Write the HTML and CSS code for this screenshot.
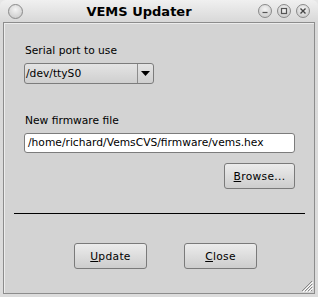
FILE: index.html
```html
<!DOCTYPE html>
<html lang="en">
  <head>
    <meta charset="UTF-8" />
    <title>VEMS Updater</title>
    <link rel="stylesheet" href="styles.css">
  </head>
  <body>
    <div class="window">
      <div class="titlebar">
        <span class="tb-btn tb-menu"></span>
        <span class="title">VEMS Updater</span>
        <span class="tb-btn">
          <svg width="14" height="14" viewBox="0 0 14 14"><path d="M4.5 8.5h5" stroke="#555" stroke-width="1.2"/></svg>
        </span>
        <span class="tb-btn">
          <svg width="14" height="14" viewBox="0 0 14 14"><rect x="4.5" y="4.5" width="5" height="5" fill="none" stroke="#555" stroke-width="1.2"/></svg>
        </span>
        <span class="tb-btn">
          <svg width="14" height="14" viewBox="0 0 14 14"><path d="M4.5 4.5l5 5M9.5 4.5l-5 5" stroke="#444" stroke-width="1.4"/></svg>
        </span>
      </div>
      <div class="frame">
        <div class="content">
          <div class="label">Serial port to use</div>
          <div class="combo">
            <span class="combo-text">/dev/ttyS0</span>
            <span class="combo-arrow">
              <svg width="9" height="5" viewBox="0 0 9 5"><path d="M0 0h9L4.5 5z" fill="#000"/></svg>
            </span>
          </div>
          <div class="label label-gap">New firmware file</div>
          <div class="textfield">/home/richard/VemsCVS/firmware/vems.hex</div>
          <div class="row-right">
            <button class="btn browse"><u>B</u>rowse...</button>
          </div>
          <div class="separator"></div>
          <div class="actions">
            <button class="btn"><u>U</u>pdate</button>
            <button class="btn"><u>C</u>lose</button>
          </div>
        </div>
        <svg class="grip" width="12" height="12" viewBox="0 0 12 12">
          <path d="M11 1L1 11M11 4L4 11M11 7L7 11M11 10L10 11" stroke="#888" stroke-width="1"/>
          <path d="M12 2L2 12M12 5L5 12M12 8L8 12" stroke="#fff" stroke-width="1"/>
        </svg>
      </div>
    </div>
  </body>
</html>
```

FILE: styles.css
```css
body {
  margin: 0;
  background: #e6e6e6;
  font-family: "DejaVu Sans", sans-serif;
  font-size: 10.7px;
  color: #000;
}
.window {
  width: 318px;
  height: 297px;
  background: linear-gradient(#f0f0f0, #d8d8d8 22px, #dcdcdc);
  border-radius: 6px 6px 0 0;
  display: flex;
  flex-direction: column;
  box-sizing: border-box;
  padding: 0 3px 3px;
}
.titlebar {
  height: 22px;
  display: flex;
  align-items: center;
  padding: 0 5px 0 3px;
}
.title {
  flex: 1;
  text-align: center;
  font-weight: bold;
  font-size: 13px;
  padding-left: 2px;
}
.tb-btn {
  width: 14px;
  height: 14px;
  border-radius: 50%;
  border: 1px solid #8a8a8a;
  background: radial-gradient(circle at 50% 35%, #f4f4f4, #c4c4c4);
  margin-left: 5px;
  display: flex;
  box-sizing: border-box;
  align-items: center;
  justify-content: center;
}
.tb-btn svg {
  flex: none;
}
.tb-menu {
  margin-left: 2px;
  width: 15px;
  height: 15px;
}
.frame {
  flex: 1;
  position: relative;
  background: #d3d3d3;
  border: 1px solid #8c8c8c;
  box-shadow: inset 1px 1px 0 #ececec;
}
.content {
  padding: 21px 19px 0 20px;
  display: flex;
  flex-direction: column;
}
.label {
  height: 13px;
  line-height: 13px;
  padding-left: 1px;
}
.label-gap {
  margin-top: 30px;
}
.combo {
  margin-top: 6px;
  width: 130px;
  height: 21px;
  box-sizing: border-box;
  border: 1px solid #7c7c7c;
  border-radius: 3px;
  background: linear-gradient(#e4e4e4, #cfcfcf);
  display: flex;
}
.combo-text {
  flex: 1;
  line-height: 19px;
  padding-left: 1px;
  border-right: 1px solid #8c8c8c;
}
.combo-arrow {
  width: 15px;
  display: flex;
  align-items: center;
  justify-content: center;
}
.textfield {
  margin-top: 6px;
  height: 20px;
  box-sizing: border-box;
  border: 1px solid #7c7c7c;
  border-radius: 3px;
  background: #fff;
  line-height: 18px;
  padding-left: 3px;
  white-space: nowrap;
  overflow: hidden;
}
.row-right {
  margin-top: 10px;
  display: flex;
  justify-content: flex-end;
}
.btn {
  width: 73px;
  height: 26px;
  box-sizing: border-box;
  border: 1px solid #7a7a7a;
  border-radius: 3px;
  background: linear-gradient(#ececec, #cdcdcd);
  font-family: "DejaVu Sans", sans-serif;
  font-size: 10.7px;
  letter-spacing: 0.3px;
  color: #000;
  padding: 0;
}
.browse {
  width: 71px;
}
.separator {
  margin: 24px -10px 0;
  height: 1px;
  background: #000;
}
.actions {
  margin-top: 29px;
  display: flex;
  justify-content: center;
  gap: 37px;
  padding-left: 12px;
}
.grip {
  position: absolute;
  right: 1px;
  bottom: 1px;
}
```
